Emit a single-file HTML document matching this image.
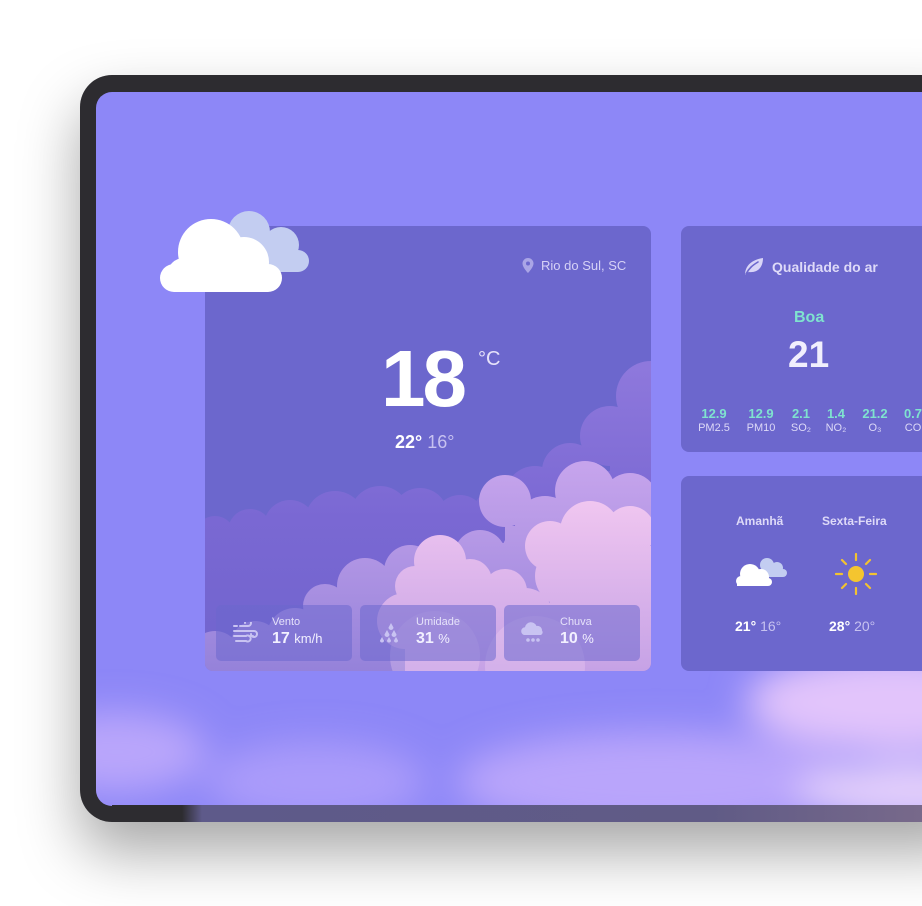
<!DOCTYPE html>
<html><head><meta charset="utf-8"><style>
*{margin:0;padding:0;box-sizing:border-box}
body{width:922px;height:906px;background:#fff;overflow:hidden;position:relative;font-family:"Liberation Sans",sans-serif}
.shadow{position:absolute;left:80px;top:75px;width:900px;height:747px;border-radius:32px;box-shadow:0 30px 60px rgba(0,0,0,.35)}
.bezel{position:absolute;left:80px;top:75px;width:900px;height:747px;border-radius:32px;background:#2d2c30}
.screen{position:absolute;left:96px;top:92px;width:900px;height:714px;border-radius:16px 0 0 16px;overflow:hidden;background:#8d87f7}
.card{position:absolute;background:#6c67cd;border-radius:8px;overflow:hidden}
.t{position:absolute;white-space:nowrap}
.box{position:absolute;top:379px;width:136px;height:56px;border-radius:5px;background:rgba(108,103,205,.55)}
.lab{position:absolute;left:56px;top:11px;font-size:11px;color:#e6e2fa}
.val{position:absolute;left:56px;top:25px;font-size:16px;font-weight:bold;color:#f2f0ff}
.val span{font-size:13px;font-weight:normal}
.aq{position:absolute;top:180px;text-align:center;width:40px}
.aq b{display:block;color:#7fe3cf;font-size:13px;font-weight:bold}
.aq i{display:block;font-style:normal;color:#ddd9f7;font-size:11px;margin-top:1px}
</style></head><body>
<div class="shadow"></div>
<div class="bezel"></div>
<div class="screen">
 <svg width="900" height="714" style="position:absolute;left:0;top:0">
  <defs><filter id="bl"><feGaussianBlur stdDeviation="18"/></filter></defs>
  <g filter="url(#bl)">
   <ellipse cx="20" cy="660" rx="90" ry="40" fill="#b9a6fb"/>
   <ellipse cx="220" cy="690" rx="110" ry="40" fill="#aa9bfa"/>
   <ellipse cx="560" cy="690" rx="200" ry="50" fill="#b9a5fb"/>
   <ellipse cx="800" cy="610" rx="150" ry="50" fill="#e2c4fb"/>
   <ellipse cx="820" cy="700" rx="120" ry="30" fill="#e5d0fb"/>
  </g>
 </svg>
</div>
<div style="position:absolute;left:112px;top:805px;width:868px;height:17px;background:linear-gradient(90deg,#2d2c30 0,#2d2c30 70px,#5e5a8a 90px,#605b86 600px,#7e6d8c 868px)"></div>

<div class="card" style="left:205px;top:226px;width:446px;height:445px">
 <svg width="446" height="445" style="position:absolute;left:0;top:0">
  <defs>
   <linearGradient id="g1" gradientUnits="userSpaceOnUse" x1="0" y1="140" x2="0" y2="445"><stop offset="0" stop-color="#8e78dc"/><stop offset=".5" stop-color="#7a68d3"/><stop offset="1" stop-color="#7064cd"/></linearGradient>
   <linearGradient id="g2" gradientUnits="userSpaceOnUse" x1="0" y1="240" x2="0" y2="445"><stop offset="0" stop-color="#c6a4ec"/><stop offset="1" stop-color="#9582da"/></linearGradient>
   <linearGradient id="g3" gradientUnits="userSpaceOnUse" x1="0" y1="275" x2="0" y2="445"><stop offset="0" stop-color="#f0c6f0"/><stop offset="1" stop-color="#c6a2e6"/></linearGradient>
  </defs>
  <g fill="url(#g1)">
   <circle cx="446" cy="170" r="35"/><circle cx="405" cy="210" r="30"/><circle cx="365" cy="245" r="28"/>
   <rect x="365" y="245" width="81" height="200"/><rect x="405" y="210" width="41" height="60"/><rect x="430" y="170" width="16" height="60"/>
   <circle cx="10" cy="310" r="20"/><circle cx="45" cy="305" r="22"/><circle cx="85" cy="300" r="26"/><circle cx="130" cy="295" r="30"/>
   <circle cx="175" cy="290" r="30"/><circle cx="215" cy="290" r="28"/><circle cx="255" cy="295" r="26"/><circle cx="295" cy="290" r="28"/><circle cx="330" cy="270" r="30"/>
   <rect x="0" y="300" width="446" height="145"/>
  </g>
  <g fill="url(#g2)">
   <circle cx="300" cy="275" r="26"/><circle cx="340" cy="300" r="30"/><circle cx="380" cy="265" r="30"/><circle cx="425" cy="275" r="28"/><circle cx="446" cy="290" r="20"/>
   <circle cx="120" cy="380" r="22"/><circle cx="160" cy="360" r="28"/><circle cx="205" cy="345" r="26"/><circle cx="245" cy="355" r="24"/><circle cx="275" cy="330" r="26"/>
   <circle cx="10" cy="430" r="25"/><circle cx="50" cy="420" r="25"/><circle cx="90" cy="410" r="28"/>
   <circle cx="130" cy="400" r="30"/><circle cx="170" cy="390" r="32"/><circle cx="210" cy="380" r="34"/><circle cx="250" cy="375" r="34"/><circle cx="290" cy="350" r="34"/><circle cx="330" cy="330" r="34"/><circle cx="380" cy="310" r="40"/><circle cx="425" cy="310" r="35"/>
   <rect x="0" y="430" width="446" height="15"/><rect x="50" y="420" width="396" height="25"/><rect x="90" y="410" width="356" height="35"/><rect x="120" y="400" width="326" height="45"/><rect x="300" y="300" width="146" height="145"/><rect x="160" y="380" width="286" height="65"/>
  </g>
  <g fill="url(#g3)">
   <circle cx="235" cy="335" r="26"/><circle cx="265" cy="355" r="22"/><circle cx="210" cy="360" r="20"/><circle cx="300" cy="365" r="22"/>
   <circle cx="200" cy="395" r="28"/><circle cx="240" cy="380" r="30"/><circle cx="280" cy="385" r="30"/><circle cx="320" cy="390" r="28"/>
   <rect x="200" y="395" width="150" height="50"/>
   <circle cx="345" cy="320" r="25"/><circle cx="385" cy="305" r="30"/><circle cx="425" cy="305" r="25"/><circle cx="360" cy="350" r="30"/>
   <rect x="345" y="320" width="101" height="125"/>
   <circle cx="420" cy="380" r="50"/>
  </g>
  <g fill="#f4d4f4" opacity=".3">
   <circle cx="230" cy="430" r="45"/><circle cx="330" cy="440" r="50"/>
  </g>
 </svg>
 <svg class="t" style="left:317px;top:32px" width="12" height="15" viewBox="0 0 12 15"><path d="M6 0a5.5 5.5 0 0 0-5.5 5.5C.5 9.5 6 15 6 15s5.5-5.5 5.5-9.5A5.5 5.5 0 0 0 6 0zm0 7.5a2 2 0 1 1 0-4 2 2 0 0 1 0 4z" fill="#aaa5e6"/></svg>
 <div class="t" style="left:336px;top:32px;font-size:13px;color:#d6d2f6">Rio do Sul, SC</div>
 <div class="t" style="left:176px;top:113px;font-size:80px;color:#fff;font-weight:bold;letter-spacing:-3px;line-height:1">18</div>
 <div class="t" style="left:273px;top:122px;font-size:20px;color:#e6e2fa">°C</div>
 <div class="t" style="left:190px;top:206px;font-size:18px;font-weight:bold;color:#fff">22° <span style="font-weight:normal;color:#c7c2f0">16°</span></div>

 <div class="box" style="left:11px">
  <svg style="position:absolute;left:17px;top:17px" width="26" height="22" viewBox="0 0 26 22" fill="none" stroke="#c9c3f2" stroke-width="2" stroke-linecap="round"><path d="M1 4h3M7 4h8a3 3 0 1 0-3-3M1 9h20a3 3 0 1 1-3 3M1 14h12M3 19h10a3 3 0 1 0 0-5M16 14h4"/></svg>
  <div class="lab">Vento</div><div class="val">17 <span>km/h</span></div></div>
 <div class="box" style="left:155px">
  <svg style="position:absolute;left:19px;top:18px" width="20" height="20" viewBox="0 0 20 20" fill="#c9c3f2"><path d="M12 0l2.5 4.5a2.5 2.5 0 1 1-5 0z M8 7l2.5 4.5a2.5 2.5 0 1 1-5 0z M15 7l2.5 4.5a2.5 2.5 0 1 1-5 0z M3 14l2 3.5a2 2 0 1 1-4 0z M10 14l2 3.5a2 2 0 1 1-4 0z M17 14l2 3.5a2 2 0 1 1-4 0z"/></svg>
  <div class="lab">Umidade</div><div class="val">31 <span>%</span></div></div>
 <div class="box" style="left:299px">
  <svg style="position:absolute;left:16px;top:17px" width="26" height="22" viewBox="0 0 26 22" fill="#c9c3f2"><path d="M4 13a4 4 0 0 1 1-7.8A6 6 0 0 1 16.5 4a4.5 4.5 0 0 1 5.5 4.5A3 3 0 0 1 21 13z"/><circle cx="8" cy="18" r="1.8"/><circle cx="13" cy="18" r="1.8"/><circle cx="18" cy="18" r="1.8"/></svg>
  <div class="lab">Chuva</div><div class="val">10 <span>%</span></div></div>
</div>

<svg style="position:absolute;left:0;top:0" width="320" height="300">
 <g fill="#c3cdf1">
  <circle cx="249" cy="232" r="21"/><circle cx="281" cy="245" r="18"/><circle cx="298" cy="261" r="11"/><rect x="235" y="248" width="63" height="24"/>
 </g>
 <g fill="#fff">
  <circle cx="184" cy="275" r="17"/><circle cx="211" cy="252" r="33"/><circle cx="244" cy="262" r="25"/><circle cx="268" cy="278" r="14"/>
  <circle cx="174" cy="278" r="14"/><rect x="174" y="264" width="94" height="28"/>
 </g>
</svg>

<div class="card" style="left:681px;top:226px;width:260px;height:226px">
 <svg class="t" style="left:62px;top:31px" width="21" height="19" viewBox="0 0 21 19"><path d="M2 18C2 9 8 3 20 1c0 9-5 15-14 14-1 0-2.5 1-4 3z" fill="#d9d5f7"/><path d="M3 17c3-6 7-9 12-12" stroke="#6c67cd" stroke-width="1.6" fill="none" stroke-linecap="round"/></svg>
 <div class="t" style="left:91px;top:33px;font-size:14px;font-weight:bold;color:#dedaf8">Qualidade do ar</div>
 <div class="t" style="left:113px;top:83px;font-size:16px;font-weight:bold;color:#7fe3cf">Boa</div>
 <div class="t" style="left:107px;top:108px;font-size:37px;font-weight:bold;color:#f1effd">21</div>
 <div class="aq" style="left:13px"><b>12.9</b><i>PM2.5</i></div>
 <div class="aq" style="left:60px"><b>12.9</b><i>PM10</i></div>
 <div class="aq" style="left:100px"><b>2.1</b><i>SO₂</i></div>
 <div class="aq" style="left:135px"><b>1.4</b><i>NO₂</i></div>
 <div class="aq" style="left:174px"><b>21.2</b><i>O₃</i></div>
 <div class="aq" style="left:212px"><b>0.7</b><i>CO</i></div>
</div>

<div class="card" style="left:681px;top:476px;width:260px;height:195px">
 <div class="t" style="left:55px;top:38px;font-size:12px;font-weight:bold;color:#dedaf8">Amanhã</div>
 <div class="t" style="left:141px;top:38px;font-size:12px;font-weight:bold;color:#dedaf8">Sexta-Feira</div>
 <svg style="position:absolute;left:52px;top:80px" width="56" height="32" viewBox="0 0 56 32">
  <g fill="#c3cdf1"><circle cx="34" cy="9" r="7"/><circle cx="44" cy="12" r="6"/><circle cx="50" cy="17" r="4"/><rect x="28" y="13" width="22" height="8"/></g>
  <g fill="#fff"><circle cx="8" cy="25" r="5"/><circle cx="17" cy="18" r="10"/><circle cx="28" cy="21" r="8"/><circle cx="35" cy="26" r="4"/><rect x="4" y="22" width="31" height="8"/></g>
 </svg>
 <svg style="position:absolute;left:154px;top:77px" width="42" height="42" viewBox="0 0 42 42" stroke="#f2c230" stroke-width="2.2" stroke-linecap="round">
  <circle cx="21" cy="21" r="8" fill="#f4c52f" stroke="none"/>
  <path d="M21 1v6M21 35v6M1 21h6M35 21h6M7 7l4 4M31 31l4 4M35 7l-4 4M11 31l-4 4"/>
 </svg>
 <div class="t" style="left:54px;top:142px;font-size:14px;font-weight:bold;color:#fff">21° <span style="font-weight:normal;color:#c7c2f0">16°</span></div>
 <div class="t" style="left:148px;top:142px;font-size:14px;font-weight:bold;color:#fff">28° <span style="font-weight:normal;color:#c7c2f0">20°</span></div>
</div>
</body></html>
